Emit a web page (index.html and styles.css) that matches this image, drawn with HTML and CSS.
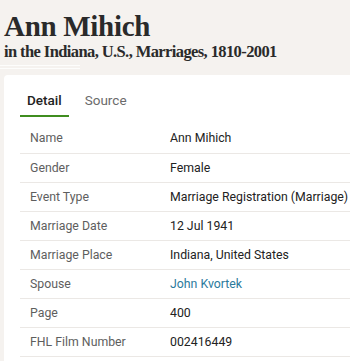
FILE: index.html
```html
<!DOCTYPE html>
<html lang="en">

<head>
  <meta charset="UTF-8">
  <meta name="viewport" content="width=device-width, initial-scale=1.0">
  <title>Ann Mihich - Indiana, U.S., Marriages</title>
  <link rel="stylesheet" href="styles.css">
</head>

<body>
  <header class="record-header">
    <h1 class="record-name">Ann Mihich</h1>
    <h2 class="record-collection">in the Indiana, U.S., Marriages, 1810-2001</h2>
    <div class="header-rule"></div>
  </header>

  <section class="record-card">
    <nav class="tabs">
      <span class="tab active">Detail</span>
      <span class="tab">Source</span>
    </nav>

    <table class="detail-table">
      <tr><th>Name</th><td>Ann Mihich</td></tr>
      <tr><th>Gender</th><td>Female</td></tr>
      <tr><th>Event Type</th><td>Marriage Registration (Marriage)</td></tr>
      <tr><th>Marriage Date</th><td>12 Jul 1941</td></tr>
      <tr><th>Marriage Place</th><td>Indiana, United States</td></tr>
      <tr><th>Spouse</th><td><a href="#" class="link">John Kvortek</a></td></tr>
      <tr><th>Page</th><td>400</td></tr>
      <tr><th>FHL Film Number</th><td>002416449</td></tr>
    </table>
  </section>
</body>
</html>
```

FILE: styles.css
```css
* {
  box-sizing: border-box;
}

body {
  margin: 0;
  padding: 0;
  background: #f5f2ef;
  font-family: Roboto, 'Liberation Sans', Arial, sans-serif;
  color: #222;
  overflow: hidden;
}

.record-header {
  padding: 10px 4px 0 4px;
}

.record-name {
  margin: 0;
  font-family: 'Liberation Serif', 'Times New Roman', serif;
  font-weight: bold;
  font-size: 29px;
  line-height: 32px;
  color: #2a2a2a;
  letter-spacing: -0.3px;
}

.record-collection {
  margin: 0;
  font-family: 'Liberation Serif', 'Times New Roman', serif;
  font-weight: bold;
  font-size: 16.5px;
  line-height: 20px;
  color: #2a2a2a;
  letter-spacing: -0.6px;
}

.header-rule {
  width: 80px;
  height: 4px;
  margin: 3px 0 0 -4px;
  border-top: 1px solid rgba(255, 255, 255, 0.8);
  border-bottom: 1px solid rgba(255, 255, 255, 0.8);
}

.record-card {
  margin: 6px 0 0 4px;
  background: #fff;
  border-radius: 4px 0 0 0;
  padding: 14px 0 0 16px;
  min-height: 300px;
}

.tabs {
  display: flex;
  gap: 9px;
}

.tab {
  padding: 3px 7px 7px 7px;
  font-size: 13.5px;
  line-height: 16px;
  color: #6b6b6b;
  border-bottom: 2px solid transparent;
}

.tab.active {
  color: #222;
  font-weight: 500;
  border-bottom-color: #3f8d1f;
}

.detail-table {
  margin-top: 7px;
  width: 100%;
  table-layout: fixed;
  border-collapse: collapse;
  font-size: 12.3px;
  white-space: nowrap;
}

.detail-table tr {
  height: 29px;
  border-bottom: 1px solid #ebe8e5;
}

.detail-table th {
  width: 150px;
  padding: 0 0 0 10px;
  text-align: left;
  font-weight: normal;
  color: #5e5e5e;
}

.detail-table td {
  padding: 0;
  color: #222;
}

.link {
  color: #2b7a9c;
  text-decoration: none;
}
```
